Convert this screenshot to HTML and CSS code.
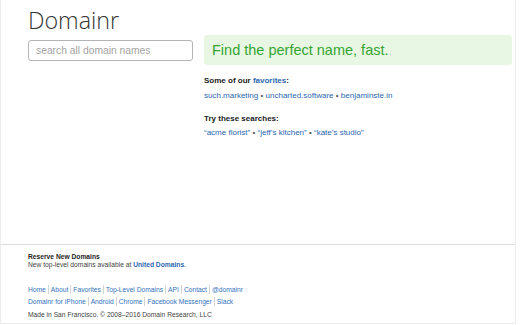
FILE: index.html
```html
<!DOCTYPE html>
<html lang="en">
<head>
    <meta charset="UTF-8">
    <title>Domainr</title>
    <link rel="stylesheet" href="styles.css">
</head>
<body>
    <div class="page">
        <div class="top">
            <h1 class="logo">Domainr</h1>
            <div class="main">
                <div class="search-col">
                    <input class="search" type="text" placeholder="search all domain names">
                </div>
                <div class="content">
                    <div class="tagline">Find the perfect name, fast.</div>
                    <h2 class="list-title">Some of our <a href="#">favorites</a>:</h2>
                    <p class="links">
                        <a href="#">such.marketing</a> <span class="dot">•</span>
                        <a href="#">uncharted.software</a> <span class="dot">•</span>
                        <a href="#">benjaminste.in</a>
                    </p>
                    <h2 class="list-title second">Try these searches:</h2>
                    <p class="links">
                        <a href="#">“acme florist”</a> <span class="dot">•</span>
                        <a href="#">“jeff’s kitchen”</a> <span class="dot">•</span>
                        <a href="#">“kate’s studio”</a>
                    </p>
                </div>
            </div>
        </div>
        <div class="footer">
            <h3 class="reserve">Reserve New Domains</h3>
            <p class="reserve-text">New top-level domains available at <a href="#">United Domains</a>.</p>
            <nav class="nav first">
                <a href="#">Home</a>
                <a href="#">About</a>
                <a href="#">Favorites</a>
                <a href="#">Top-Level Domains</a>
                <a href="#">API</a>
                <a href="#">Contact</a>
                <a href="#">@domainr</a>
            </nav>
            <nav class="nav">
                <a href="#">Domainr for iPhone</a>
                <a href="#">Android</a>
                <a href="#">Chrome</a>
                <a href="#">Facebook Messenger</a>
                <a href="#">Slack</a>
            </nav>
            <p class="made">Made in San Francisco. © 2008–2016 Domain Research, LLC</p>
        </div>
    </div>
</body>
</html>
```

FILE: styles.css
```css
body {
    margin: 0;
    font-family: "Liberation Sans", Arial, sans-serif;
    color: #333;
    background-color: #fff;
}
a {
    color: #2b67b1;
    text-decoration: none;
}
.page {
    width: 516px;
    height: 324px;
    box-sizing: border-box;
    border: 1px solid #ececec;
    border-top: none;
    display: flex;
    flex-direction: column;
}
.top {
    flex: 0 0 244px;
    padding-left: 27px;
}
.logo {
    margin: 0;
    padding-top: 8px;
    font-family: "Open Sans", Roboto, "Liberation Sans", sans-serif;
    font-weight: 300;
    font-size: 23.3px;
    line-height: 24px;
    color: #333;
}
.main {
    display: flex;
    margin-top: 3px;
}
.search-col {
    width: 165px;
    margin-right: 11px;
    padding-top: 5px;
}
.search {
    display: block;
    width: 165px;
    height: 21px;
    box-sizing: border-box;
    margin: 0;
    padding: 0 7px;
    border: 1px solid #b4b4b4;
    border-radius: 3px;
    font-family: "Liberation Sans", Arial, sans-serif;
    font-size: 10.3px;
    color: #333;
}
.search::placeholder {
    color: #a3a3a3;
}
.content {
    width: 308px;
}
.tagline {
    height: 30px;
    padding-left: 8px;
    border-radius: 3px;
    background-color: #e8f7e4;
    color: #35a532;
    font-size: 14.5px;
    line-height: 30px;
}
.list-title {
    margin: 11.2px 0 0;
    font-size: 8px;
    line-height: 10px;
    font-weight: bold;
    color: #222;
}
.list-title.second {
    margin-top: 13.3px;
}
.links {
    margin: 4.5px 0 0;
    font-size: 8px;
    line-height: 10px;
}
.dot {
    color: #555;
}
.footer {
    flex: 1;
    border-top: 1px solid #dcdcdc;
    padding: 7.7px 0 0 27px;
    font-size: 6.7px;
    color: #444;
}
.reserve {
    margin: 0;
    font-size: 6.7px;
    line-height: 8px;
    font-weight: bold;
    color: #222;
}
.reserve-text {
    margin: 0;
    line-height: 8px;
}
.reserve-text a {
    font-weight: bold;
}
.nav {
    display: flex;
    align-items: center;
    height: 12px;
}
.nav.first {
    margin-top: 14.5px;
}
.nav a {
    line-height: 9px;
    padding: 0 2px;
    border-left: 1px solid #d4d4d4;
    color: #3573bd;
}
.nav a:first-child {
    border-left: none;
    padding-left: 0;
}
.made {
    margin: 1.5px 0 0;
    line-height: 12px;
}
```
